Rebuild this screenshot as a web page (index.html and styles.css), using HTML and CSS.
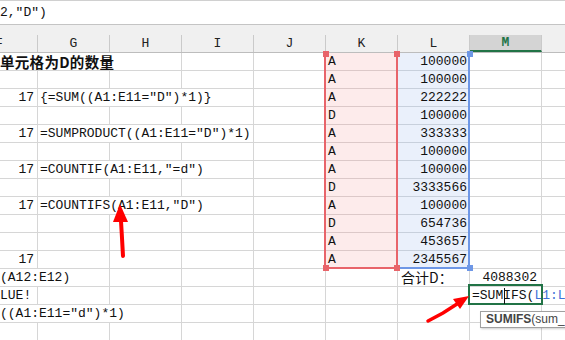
FILE: index.html
```html
<!DOCTYPE html>
<html lang="zh">
<head>
  <meta charset="UTF-8" />
  <title>计数公式</title>
  <link rel="stylesheet" href="styles.css">
</head>
<body>
  <div class="sheet">
    <div class="fbar"><span class="fx">2,"D")</span></div>
    <div class="band"></div>

    <div class="row head">
      <div class="h hf"><span>F</span></div>
      <div class="h">G</div>
      <div class="h">H</div>
      <div class="h">I</div>
      <div class="h">J</div>
      <div class="h">K</div>
      <div class="h">L</div>
      <div class="h on">M</div>
      <div class="h"></div>
    </div>

    <!-- 1 -->
    <div class="row">
      <div class="c s3 title">单元格为D的数量</div>
      <div class="c"></div><div class="c"></div>
      <div class="c k">A</div><div class="c l">100000</div>
      <div class="c"></div><div class="c"></div>
    </div>
    <!-- 2 -->
    <div class="row">
      <div class="c"></div><div class="c"></div><div class="c"></div><div class="c"></div><div class="c"></div>
      <div class="c k">A</div><div class="c l">100000</div>
      <div class="c"></div><div class="c"></div>
    </div>
    <!-- 3 -->
    <div class="row">
      <div class="c n">17</div>
      <div class="c s3">{=SUM((A1:E11="D")*1)}</div>
      <div class="c"></div>
      <div class="c k">A</div><div class="c l">222222</div>
      <div class="c"></div><div class="c"></div>
    </div>
    <!-- 4 -->
    <div class="row">
      <div class="c"></div><div class="c"></div><div class="c"></div><div class="c"></div><div class="c"></div>
      <div class="c k">D</div><div class="c l">100000</div>
      <div class="c"></div><div class="c"></div>
    </div>
    <!-- 5 -->
    <div class="row">
      <div class="c n">17</div>
      <div class="c s3">=SUMPRODUCT((A1:E11="D")*1)</div>
      <div class="c"></div>
      <div class="c k">A</div><div class="c l">333333</div>
      <div class="c"></div><div class="c"></div>
    </div>
    <!-- 6 -->
    <div class="row">
      <div class="c"></div><div class="c"></div><div class="c"></div><div class="c"></div><div class="c"></div>
      <div class="c k">A</div><div class="c l">100000</div>
      <div class="c"></div><div class="c"></div>
    </div>
    <!-- 7 -->
    <div class="row">
      <div class="c n">17</div>
      <div class="c s3">=COUNTIF(A1:E11,"=d")</div>
      <div class="c"></div>
      <div class="c k">A</div><div class="c l">100000</div>
      <div class="c"></div><div class="c"></div>
    </div>
    <!-- 8 -->
    <div class="row">
      <div class="c"></div><div class="c"></div><div class="c"></div><div class="c"></div><div class="c"></div>
      <div class="c k">D</div><div class="c l">3333566</div>
      <div class="c"></div><div class="c"></div>
    </div>
    <!-- 9 -->
    <div class="row">
      <div class="c n">17</div>
      <div class="c s3">=COUNTIFS(A1:E11,"D")</div>
      <div class="c"></div>
      <div class="c k">A</div><div class="c l">100000</div>
      <div class="c"></div><div class="c"></div>
    </div>
    <!-- 10 -->
    <div class="row">
      <div class="c"></div><div class="c"></div><div class="c"></div><div class="c"></div><div class="c"></div>
      <div class="c k">D</div><div class="c l">654736</div>
      <div class="c"></div><div class="c"></div>
    </div>
    <!-- 11 -->
    <div class="row">
      <div class="c"></div><div class="c"></div><div class="c"></div><div class="c"></div><div class="c"></div>
      <div class="c k">A</div><div class="c l">453657</div>
      <div class="c"></div><div class="c"></div>
    </div>
    <!-- 12 -->
    <div class="row">
      <div class="c n">17</div>
      <div class="c"></div><div class="c"></div><div class="c"></div><div class="c"></div>
      <div class="c k">A</div><div class="c l">2345567</div>
      <div class="c"></div><div class="c"></div>
    </div>
    <!-- 13 -->
    <div class="row">
      <div class="c s2 cut">(A12:E12)</div>
      <div class="c"></div><div class="c"></div><div class="c"></div><div class="c"></div>
      <div class="c sum">合计D：</div>
      <div class="c tot">4088302</div>
      <div class="c"></div>
    </div>
    <!-- 14 -->
    <div class="row">
      <div class="c cut">LUE!</div>
      <div class="c"></div><div class="c"></div><div class="c"></div><div class="c"></div><div class="c"></div><div class="c"></div>
      <div class="c s2 edit">=SUMIFS(<span class="ref">L1:L</span></div>
    </div>
    <!-- 15 -->
    <div class="row">
      <div class="c s3 cut">((A1:E11="d")*1)</div>
      <div class="c"></div><div class="c"></div><div class="c"></div><div class="c"></div><div class="c"></div><div class="c"></div>
    </div>
    <!-- 16 -->
    <div class="row">
      <div class="c"></div><div class="c"></div><div class="c"></div><div class="c"></div><div class="c"></div>
      <div class="c"></div><div class="c"></div><div class="c"></div><div class="c"></div>
    </div>

    <!-- plages de référence en surbrillance -->
    <div class="range range-l"></div>
    <div class="range range-k"></div>
    <div class="grip red" style="left:323px; top:51px"></div>
    <div class="grip red" style="left:394px; top:51px"></div>
    <div class="grip blue" style="left:467px; top:51px"></div>
    <div class="grip red" style="left:323px; top:265px"></div>
    <div class="grip red" style="left:394px; top:265px"></div>
    <div class="grip blue" style="left:467px; top:265px"></div>

    <div class="active"></div>
    <div class="ibeam"></div>
    <div class="tip"><b>SUMIFS</b>(sum_range, criteria</div>

    <svg class="marks" width="565" height="340" viewBox="0 0 565 340">
      <path d="M123 256 L122 238 L121 221" stroke="#f00" stroke-width="4" fill="none" stroke-linecap="round"/>
      <polygon points="120,204 113,222 128,222" fill="#f00"/>
      <path d="M428 321 L443 313 L457 304" stroke="#f00" stroke-width="3.5" fill="none" stroke-linecap="round"/>
      <polygon points="469,296 453,299 460,309" fill="#f00"/>
    </svg>
  </div>
</body>
</html>
```

FILE: styles.css
```css
body {
  margin: 0;
  background: #fff;
}
.sheet {
  position: relative;
  width: 565px;
  height: 340px;
  overflow: hidden;
  font-family: "Liberation Mono", "Noto Sans CJK SC", monospace;
  font-size: 13px;
  color: #111;
}
.fbar {
  height: 23px;
  border-top: 1px solid #d0d0d0;
  border-bottom: 1px solid #c4c4c4;
  line-height: 23px;
  white-space: nowrap;
}
.band {
  height: 10px;
  background: #f0f0f0;
}
.row {
  display: grid;
  grid-template-columns: 38px repeat(8, 72px);
  height: 18px;
}
.row.head {
  height: 18px;
  background: #f0f0f0;
  border-bottom: 1px solid #bdbdbd;
  box-sizing: border-box;
}
.h {
  border-right: 1px solid #cacaca;
  text-align: center;
  line-height: 17px;
  color: #222;
}
.hf {
  text-align: left;
  overflow: hidden;
}
.hf span {
  display: inline-block;
  margin-left: -5px;
}
.h.on {
  background: #d4d4d4;
  color: #217346;
  font-weight: bold;
  border-bottom: 2px solid #217346;
  line-height: 15px;
}
.c {
  box-sizing: border-box;
  height: 18px;
  border-right: 1px solid #d6d6d6;
  border-bottom: 1px solid #d6d6d6;
  padding: 0 2px;
  line-height: 17px;
  white-space: nowrap;
  background: #fff;
}
.s2 {
  grid-column: span 2;
}
.s3 {
  grid-column: span 3;
}
.n {
  text-align: right;
  padding-right: 3px;
}
.cut {
  padding-left: 0;
}
.title {
  padding-left: 0;
  font-family: "Noto Sans CJK SC", sans-serif;
  font-size: 14.5px;
  font-weight: bold;
  letter-spacing: 0.3px;
}
.k {
  background: #fdebeb;
  border-bottom-color: #dcc8c8;
  border-right: none;
}
.l {
  background: #eaf0fb;
  border-bottom-color: #c8d0dc;
  text-align: right;
}
.sum {
  padding-left: 3px;
  font-family: "Noto Sans CJK SC", sans-serif;
  font-size: 14px;
}
.tot {
  text-align: right;
  padding-right: 4px;
}
.edit {
  border-right: none;
  padding-left: 2px;
}
.ref {
  color: #3f72d9;
}
.range {
  position: absolute;
  top: 52px;
  height: 215px;
  border-style: solid;
  border-width: 0 2px 2px 2px;
}
.range-k {
  left: 324px;
  width: 70px;
  border-color: #e8646a;
}
.range-l {
  left: 396px;
  width: 70px;
  border-color: #6e97e6;
}
.grip {
  position: absolute;
  width: 6px;
  height: 6px;
}
.grip.red {
  background: #e8646a;
}
.grip.blue {
  background: #6e97e6;
}
.active {
  position: absolute;
  left: 468px;
  top: 284px;
  width: 71px;
  height: 17px;
  border: 2px solid #217346;
}
.ibeam {
  position: absolute;
  left: 504px;
  top: 288px;
  width: 1px;
  height: 16px;
  background: #111;
}
.tip {
  position: absolute;
  left: 480px;
  top: 311px;
  width: 120px;
  height: 15px;
  padding-left: 5px;
  border: 1px solid #a0a0a0;
  background: #fff;
  box-shadow: 1px 1px 2px rgba(0, 0, 0, 0.2);
  font-family: "Liberation Sans", Arial, sans-serif;
  font-size: 12px;
  line-height: 15px;
  color: #444;
  white-space: nowrap;
}
.marks {
  position: absolute;
  left: 0;
  top: 0;
  pointer-events: none;
}
```
